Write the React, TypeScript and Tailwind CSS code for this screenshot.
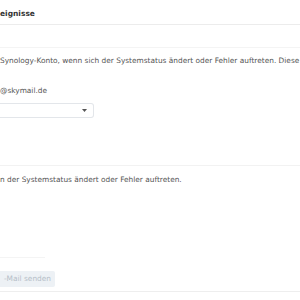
export default function App() {
  return (
    <div className="h-[300px] w-[300px] overflow-hidden bg-white font-['DejaVu_Sans',sans-serif] text-[7.4px] text-[#555]">
      {/* header */}
      <div className="h-[24px] pt-[9px]">
        <h1 className="whitespace-nowrap text-[7.5px] font-bold leading-[10px] text-[#333]">eignisse</h1>
      </div>
      <div className="h-px bg-[#ececec]" />

      <div className="h-[22px]" />
      <div className="h-px bg-[#f4f4f4]" />

      <p className="mt-[8px] whitespace-nowrap leading-[10px]">
        Synology-Konto, wenn sich der Systemstatus ändert oder Fehler auftreten. Diese
      </p>

      <p className="mt-[20px] whitespace-nowrap leading-[10px]">@skymail.de</p>

      <div className="mt-[7px] flex h-[15px] w-[94px] items-center justify-end rounded-r-[3px] border border-l-0 border-[#e3e6ea] pr-[6px]">
        <svg width="5" height="3" viewBox="0 0 5 3">
          <path d="M0 0h5L2.5 3z" fill="#555" />
        </svg>
      </div>

      <div className="mt-[47px] h-px bg-[#f2f2f2]" />

      <p className="mt-[9px] whitespace-nowrap leading-[10px]">
        n der Systemstatus ändert oder Fehler auftreten.
      </p>

      <div className="mt-[72px] h-px w-[45px] bg-[#f4f4f4]" />

      <div className="mt-[13px] flex h-[16px] w-[55px] items-center justify-end rounded-r-[2px] bg-[#edf1f5] pr-[4px]">
        <span className="whitespace-nowrap text-[7.4px] text-[#b5bec8]">-Mail senden</span>
      </div>

      <div className="mt-[4px] h-px bg-[#eeeeee]" />
    </div>
  );
}
